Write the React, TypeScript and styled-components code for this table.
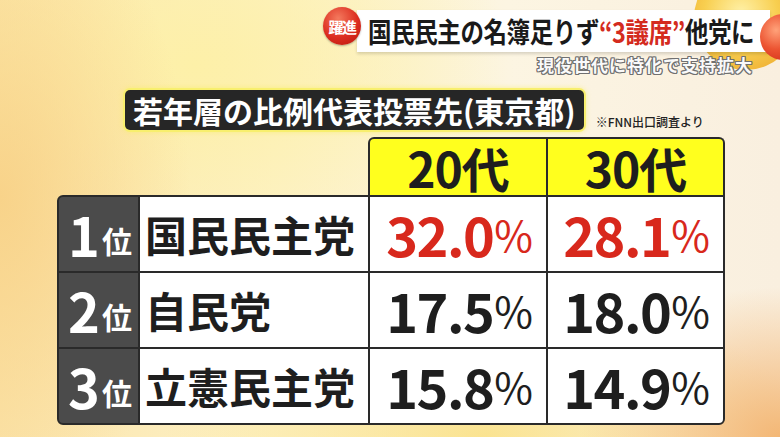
import React from "react";
import styled, { createGlobalStyle } from "styled-components";

const GlobalStyle = createGlobalStyle`
  html, body { margin: 0; padding: 0; }
  body { font-family: "Noto Sans CJK JP", "Noto Sans", sans-serif; }
`;

const Page = styled.div`
  position: relative;
  width: 780px;
  height: 437px;
  overflow: hidden;
  display: flex;
  flex-direction: column;
  background:
    radial-gradient(ellipse 200px 150px at 100% 100%, rgba(243, 180, 112, 0.95), rgba(243, 180, 112, 0) 100%),
    radial-gradient(ellipse 320px 150px at 62% 100%, rgba(250, 224, 130, 0.85), rgba(250, 224, 130, 0) 100%),
    radial-gradient(ellipse 190px 320px at 0% 45%, rgba(248, 210, 136, 0.95), rgba(248, 210, 136, 0) 100%),
    radial-gradient(ellipse 320px 200px at 25% 15%, rgba(253, 240, 168, 1), rgba(253, 240, 168, 0) 100%),
    linear-gradient(90deg, #fbe4aa 0%, #fdf2c8 35%, #fcf5e2 65%, #f9efdf 100%);
`;

const GoldOrb = styled.div`
  position: absolute;
  left: 694px;
  top: -34px;
  width: 104px;
  height: 104px;
  border-radius: 50%;
  background: radial-gradient(circle at 45% 45%, #fff1a8 0%, #f8cf50 45%, #f1b73a 72%, rgba(241, 183, 58, 0) 100%);
  z-index: 1;
`;

const RedOrb = styled.div`
  position: absolute;
  left: 760px;
  top: 14px;
  width: 46px;
  height: 46px;
  border-radius: 50%;
  background: radial-gradient(circle at 35% 35%, #ffa27a 0%, #ec5432 45%, #d6341c 80%);
  z-index: 4;
`;

const Top = styled.header`
  position: relative;
  z-index: 3;
  display: flex;
  flex-direction: column;
  padding: 7px 0 0 323px;
`;

const BannerRow = styled.div`
  display: flex;
  align-items: flex-start;
`;

const Badge = styled.div`
  position: relative;
  z-index: 2;
  width: 38px;
  height: 38px;
  margin-right: -4px;
  border-radius: 50%;
  background: radial-gradient(circle at 40% 30%, #f47a5e 0%, #dc2d1f 55%, #b5150e 100%);
  box-shadow: 0 1px 2px rgba(0, 0, 0, 0.3);
  color: #fff;
  font-size: 15px;
  font-weight: 700;
  letter-spacing: -1.5px;
  display: flex;
  align-items: center;
  justify-content: center;
`;

const Banner = styled.div`
  margin-top: 3px;
  box-sizing: border-box;
  width: 413px;
  height: 42px;
  padding-left: 11px;
  background: #fff;
  box-shadow: 0 2px 3px rgba(0, 0, 0, 0.15);
  display: flex;
  align-items: center;
  white-space: nowrap;
  color: #1a1a1a;
  font-size: 28px;
  font-weight: 700;
`;

const Headline = styled.span`
  display: inline-block;
  transform: scaleX(0.84);
  transform-origin: left center;
  letter-spacing: -0.5px;
`;

const Accent = styled.span`
  color: #d42b1e;
`;

const Sub = styled.div`
  align-self: flex-end;
  margin: 3px 27px 0 0;
  font-size: 17px;
  line-height: 20px;
  font-weight: 700;
  letter-spacing: 1px;
  color: #fafafa;
  text-shadow:
    1px 0 0 #707070, -1px 0 0 #707070, 0 1px 0 #707070, 0 -1px 0 #707070,
    1px 1px 0 #707070, -1px -1px 0 #707070, 1px -1px 0 #707070, -1px 1px 0 #707070;
`;

const TitleRow = styled.div`
  display: flex;
  align-items: flex-end;
  margin: 15px 0 0 125px;
`;

const TitleBox = styled.h1`
  margin: 0;
  height: 40px;
  line-height: 40px;
  padding: 0 8px;
  border-radius: 5px;
  background: #262626;
  box-shadow: 0 0 0 2px #f8ef6e, 0 0 5px 2px rgba(250, 238, 100, 0.6);
  color: #fff;
  font-size: 30px;
  font-weight: 700;
  white-space: nowrap;
`;

const Note = styled.span`
  margin: 0 0 1px 12px;
  font-size: 12px;
  line-height: 14px;
  font-weight: 500;
  color: #222;
`;

const Table = styled.section`
  margin: 7px 0 0 57px;
  width: 668px;
`;

const HeadBox = styled.div`
  margin-left: 311px;
  box-sizing: border-box;
  height: 58px;
  display: grid;
  grid-template-columns: 176px 175px;
  gap: 2px;
  background: #2a2a2a;
  border: 2px solid #2a2a2a;
  border-bottom: none;
  border-radius: 6px 6px 0 0;
`;

const HeadCell = styled.div`
  background: #ffff1e;
  display: flex;
  align-items: center;
  justify-content: center;
  color: #1e1e1e;
  font-size: 48px;
  font-weight: 700;
  line-height: 1;
  letter-spacing: -1px;
  &:first-child { border-top-left-radius: 4px; }
  &:last-child { border-top-right-radius: 4px; }
`;

const Body = styled.div`
  display: grid;
  grid-template-columns: 79px 228px 176px 175px;
  grid-auto-rows: 74px;
  gap: 2px;
  background: #2a2a2a;
  border: 2px solid #2a2a2a;
  border-radius: 6px 0 6px 6px;
  overflow: hidden;
`;

const RankCell = styled.div`
  background: #4b4b4b;
  color: #fff;
  display: flex;
  align-items: center;
  justify-content: center;
  font-weight: 700;
  line-height: 1;
`;

const RankLabel = styled.span`
  display: inline-block;
  white-space: nowrap;
  margin-left: 3px;
`;

const RankNum = styled.span`
  font-size: 54px;
`;

const RankUnit = styled.span`
  font-size: 30px;
  margin-left: 2px;
  vertical-align: 4px;
`;

const NameCell = styled.div`
  background: #fff;
  display: flex;
  align-items: center;
  padding-left: 5px;
  color: #1e1e1e;
  font-size: 42px;
  font-weight: 700;
  line-height: 1;
  white-space: nowrap;
`;

const PctCell = styled.div<{ $hot?: boolean }>`
  background: #fff;
  display: flex;
  align-items: center;
  justify-content: flex-end;
  padding-right: 13px;
  color: ${(p) => (p.$hot ? "#d8281c" : "#1e1e1e")};
  line-height: 1;
  white-space: nowrap;
`;

const Num = styled.span`
  font-size: 54px;
  font-weight: 700;
  letter-spacing: -1.5px;
`;

const Percent = styled.span`
  font-size: 42px;
  font-weight: 400;
  margin-left: 1px;
`;

const rows = [
  { rank: "1", name: "国民民主党", a: "32.0", b: "28.1", hot: true },
  { rank: "2", name: "自民党", a: "17.5", b: "18.0", hot: false },
  { rank: "3", name: "立憲民主党", a: "15.8", b: "14.9", hot: false },
];

export default function App() {
  return (
    <>
      <GlobalStyle />
      <Page>
        <GoldOrb />
        <RedOrb />
        <Top>
          <BannerRow>
            <Badge>躍進</Badge>
            <Banner>
              <Headline>
                国民民主の名簿足りず<Accent>“3議席”</Accent>他党に
              </Headline>
            </Banner>
          </BannerRow>
          <Sub>現役世代に特化で支持拡大</Sub>
        </Top>
        <TitleRow>
          <TitleBox>若年層の比例代表投票先(東京都)</TitleBox>
          <Note>※FNN出口調査より</Note>
        </TitleRow>
        <Table>
          <HeadBox>
            <HeadCell>20代</HeadCell>
            <HeadCell>30代</HeadCell>
          </HeadBox>
          <Body>
            {rows.map((r) => (
              <React.Fragment key={r.rank}>
                <RankCell>
                  <RankLabel>
                    <RankNum>{r.rank}</RankNum>
                    <RankUnit>位</RankUnit>
                  </RankLabel>
                </RankCell>
                <NameCell>{r.name}</NameCell>
                <PctCell $hot={r.hot}>
                  <Num>{r.a}</Num>
                  <Percent>%</Percent>
                </PctCell>
                <PctCell $hot={r.hot}>
                  <Num>{r.b}</Num>
                  <Percent>%</Percent>
                </PctCell>
              </React.Fragment>
            ))}
          </Body>
        </Table>
      </Page>
    </>
  );
}
